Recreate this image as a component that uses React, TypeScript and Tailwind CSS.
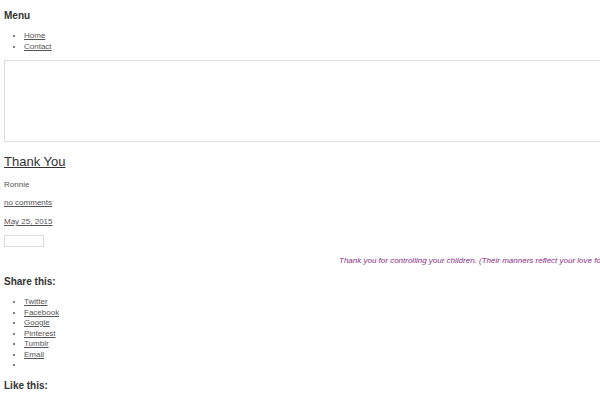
import React from 'react';

const shareLinks = ['Twitter', 'Facebook', 'Google', 'Pinterest', 'Tumblr', 'Email'];

export default function App() {
  return (
    <div className="w-[600px] h-[400px] overflow-hidden bg-white px-[4px] text-[#555] font-['Liberation_Sans',Arial,sans-serif]">
      {/* menu */}
      <h3 className="mt-[10px] text-[10px] leading-[12px] font-bold text-[#333]">Menu</h3>
      <ul className="mt-[9px] list-disc pl-[20px] text-[8px] leading-[10.5px]">
        <li><a href="#" className="underline text-[#555]">Home</a></li>
        <li><a href="#" className="underline text-[#555]">Contact</a></li>
      </ul>

      <div className="mt-[7.5px] h-[82px] w-[620px] border border-[#ddd]"></div>

      {/* post */}
      <h1 className="mt-[12.5px] text-[13px] leading-[16px] text-[#333]">
        <a href="#" className="underline">Thank You</a>
      </h1>
      <div className="mt-[10px] text-[8px] leading-[10px]">Ronnie</div>
      <div className="mt-[8px] text-[8px] leading-[10px]">
        <a href="#" className="underline">no comments</a>
      </div>
      <div className="mt-[9px] text-[8px] leading-[10px]">
        <a href="#" className="underline">May 25, 2015</a>
      </div>
      <div className="mt-[8px] h-[12px] w-[40px] border border-[#ddd]"></div>

      <p className="mt-[9px] pl-[335px] whitespace-nowrap text-[8px] leading-[10px] italic text-[#8a2d8a]">
        Thank you for controlling your children. (Their manners reflect your love for them.)
      </p>

      {/* sharing */}
      <h3 className="mt-[10px] text-[10px] leading-[12px] font-bold text-[#333]">Share this:</h3>
      <ul className="mt-[9px] list-disc pl-[20px] text-[8px] leading-[10.5px]">
        {shareLinks.map((s) => (
          <li key={s}><a href="#" className="underline">{s}</a></li>
        ))}
        <li className="h-[10.5px]"></li>
      </ul>
      <h3 className="mt-[9.5px] text-[10px] leading-[12px] font-bold text-[#333]">Like this:</h3>
    </div>
  );
}
